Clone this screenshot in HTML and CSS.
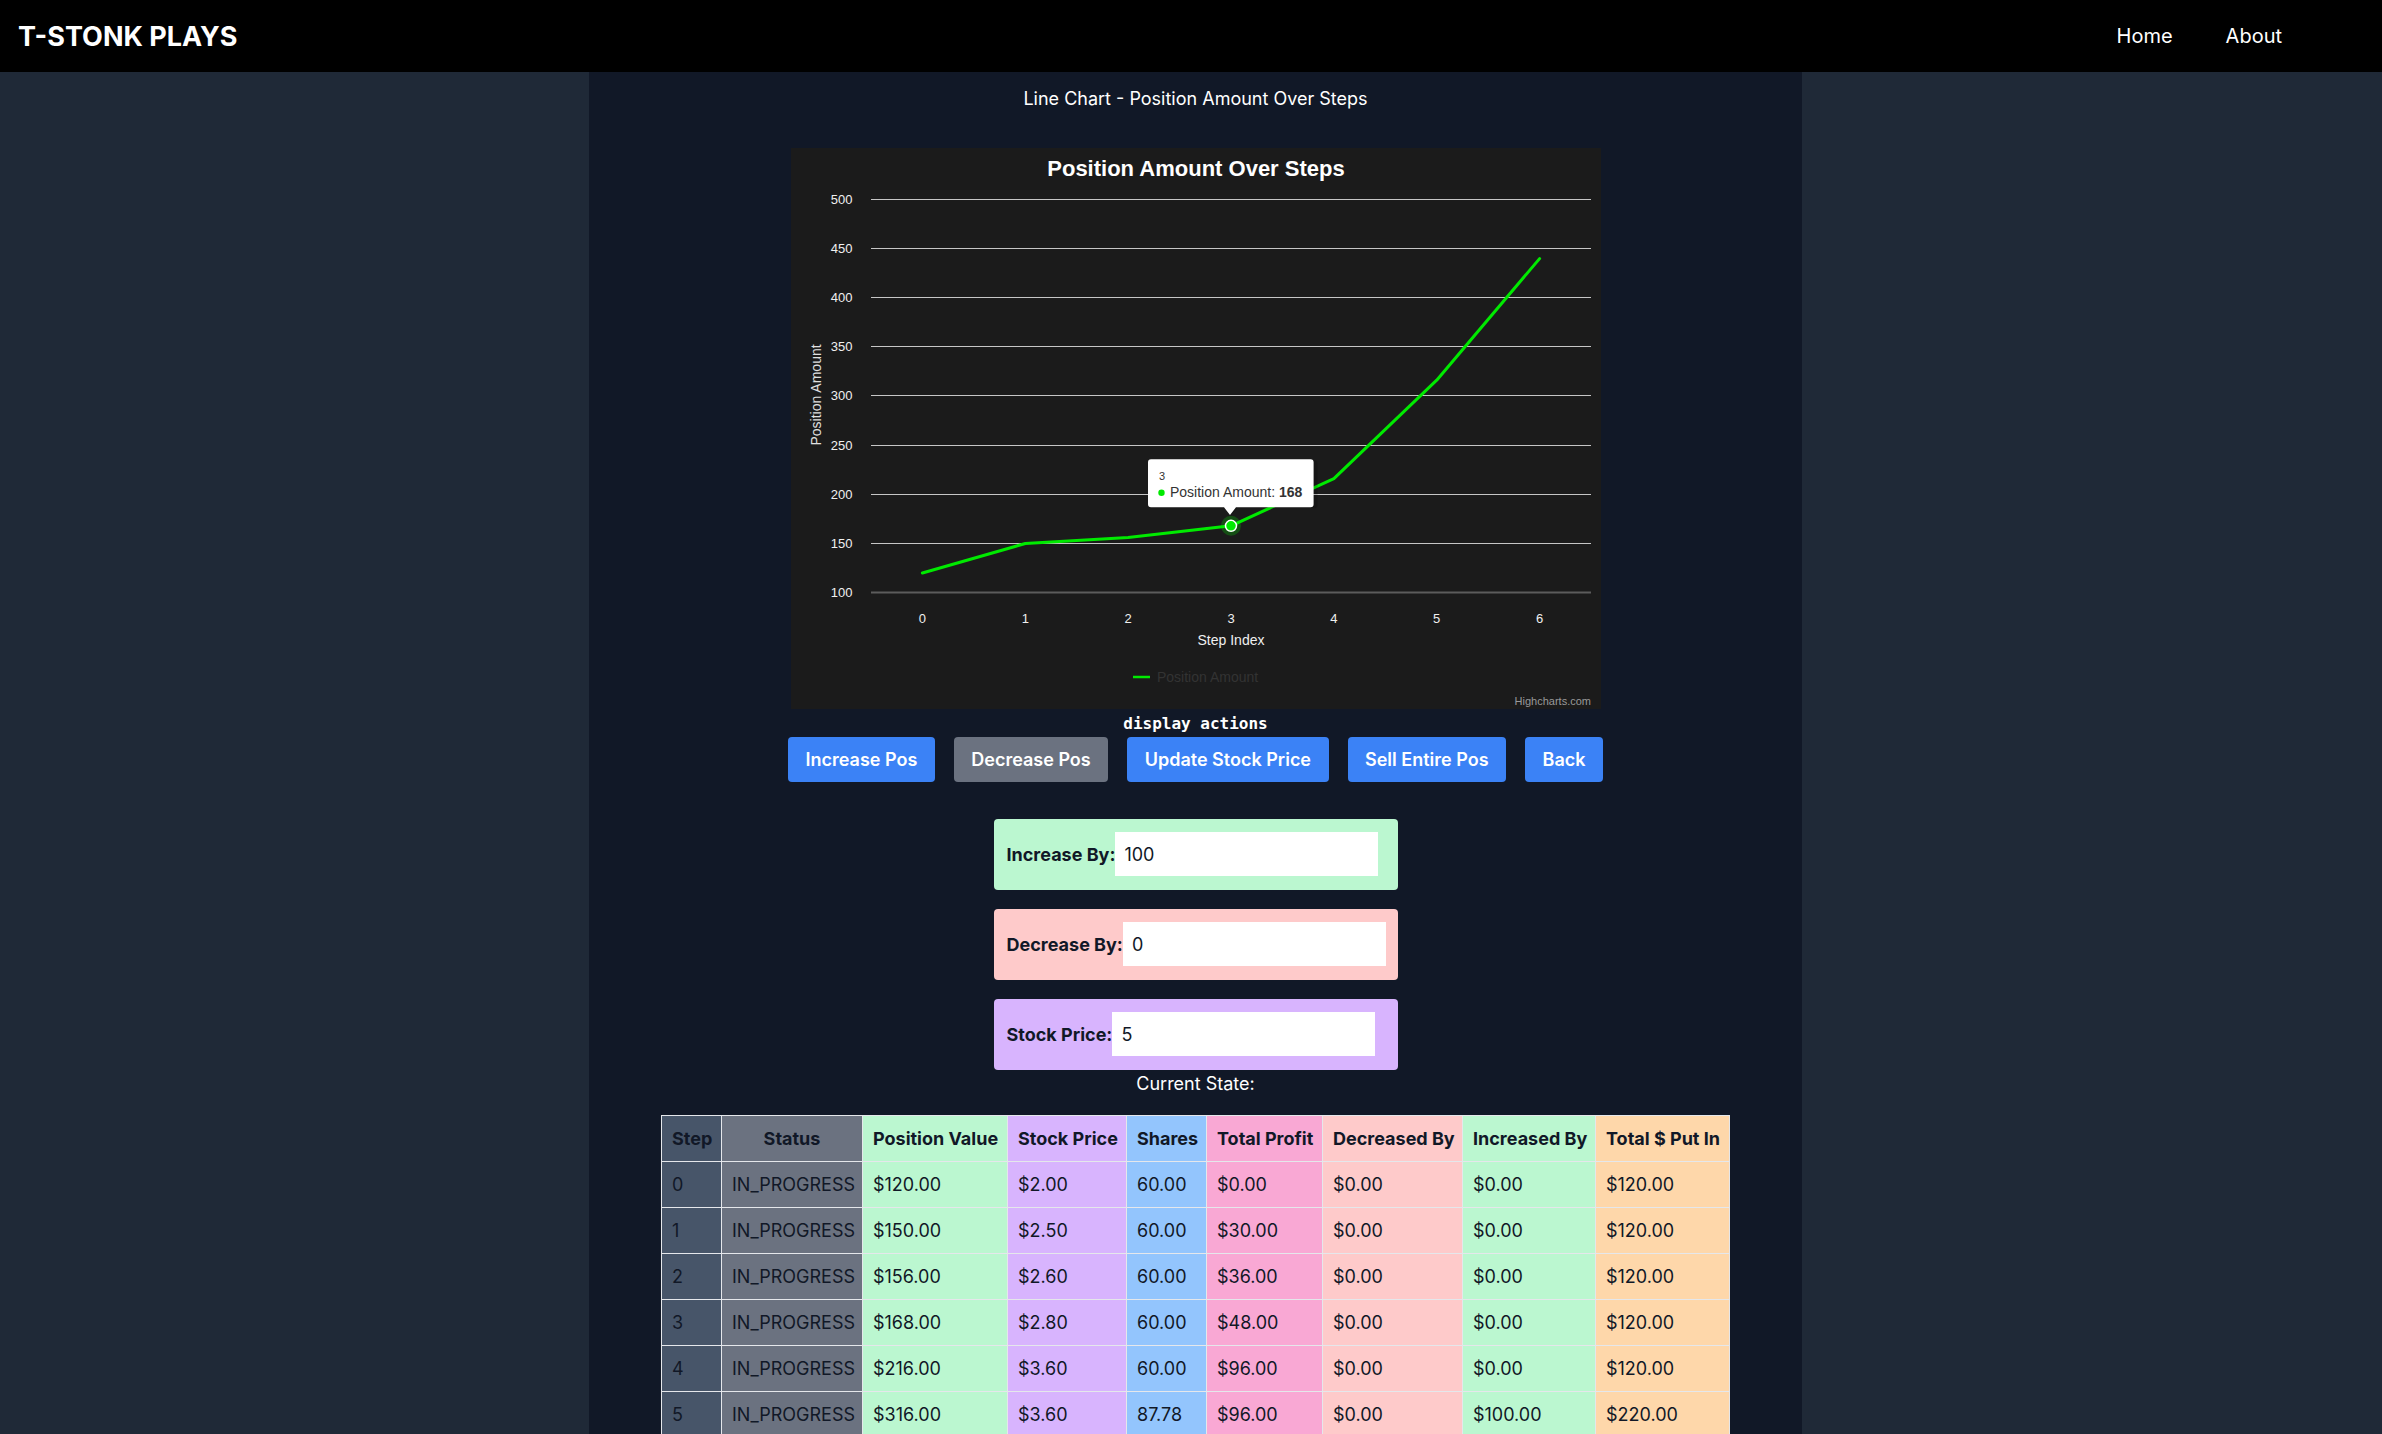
FILE: index.html
```html
<!DOCTYPE html>
<html lang="en">
<head>
<meta charset="utf-8">
<title>T-STONK PLAYS</title>
<link rel="stylesheet" href="styles.css">
</head>
<body>
<header class="topbar">
  <div class="logo">T-STONK PLAYS</div>
  <nav class="nav">
    <a href="#">Home</a>
    <a href="#">About</a>
  </nav>
</header>
<div class="layout">
  <main class="main">
    <div class="page-title">Line Chart - Position Amount Over Steps</div>
    <svg class="chart" width="810" height="561" viewBox="0 0 810 561" xmlns="http://www.w3.org/2000/svg">
      <rect class="ch-bg" x="0" y="0" width="810" height="561"/>
      <text class="ch-title" x="405" y="28" text-anchor="middle">Position Amount Over Steps</text>
      <g class="ch-grid">
        <line x1="80" x2="800" y1="51.5" y2="51.5"/>
        <line x1="80" x2="800" y1="100.5" y2="100.5"/>
        <line x1="80" x2="800" y1="149.5" y2="149.5"/>
        <line x1="80" x2="800" y1="198.5" y2="198.5"/>
        <line x1="80" x2="800" y1="247.5" y2="247.5"/>
        <line x1="80" x2="800" y1="297.5" y2="297.5"/>
        <line x1="80" x2="800" y1="346.5" y2="346.5"/>
        <line x1="80" x2="800" y1="395.5" y2="395.5"/>
      </g>
      <line class="ch-axis" x1="80" x2="800" y1="444.6" y2="444.6"/>
      <g class="ch-ylabels" text-anchor="end">
        <text x="61.5" y="55.5">500</text>
        <text x="61.5" y="104.7">450</text>
        <text x="61.5" y="153.9">400</text>
        <text x="61.5" y="203.1">350</text>
        <text x="61.5" y="252.3">300</text>
        <text x="61.5" y="301.5">250</text>
        <text x="61.5" y="350.7">200</text>
        <text x="61.5" y="399.9">150</text>
        <text x="61.5" y="449.1">100</text>
      </g>
      <text class="ch-ytitle" transform="translate(29.5 247) rotate(-90)" text-anchor="middle">Position Amount</text>
      <g class="ch-xlabels" text-anchor="middle">
        <text x="131.4" y="475">0</text>
        <text x="234.3" y="475">1</text>
        <text x="337.1" y="475">2</text>
        <text x="440" y="475">3</text>
        <text x="542.9" y="475">4</text>
        <text x="645.7" y="475">5</text>
        <text x="748.6" y="475">6</text>
      </g>
      <text class="ch-xtitle" x="440" y="497" text-anchor="middle">Step Index</text>
      <polyline class="ch-series" points="131.4,425 234.3,395.5 337.1,389.6 440,377.8 542.9,330.6 645.7,232.2 748.6,110.6"/>
      <circle class="ch-halo" cx="440" cy="377.8" r="10"/>
      <circle class="ch-point" cx="440" cy="377.8" r="5.5"/>
      <line class="ch-legend-line" x1="342" x2="359" y1="529" y2="529"/>
      <text class="ch-legend" x="366" y="534">Position Amount</text>
      <text class="ch-credits" x="800" y="557" text-anchor="end">Highcharts.com</text>
      <path class="ch-tip-shadow" d="M360.5 312.3 H523.6 Q526.6 312.3 526.6 315.3 V357.3 Q526.6 360.3 523.6 360.3 H446 L440 368 L434 360.3 H360.5 Q357.5 360.3 357.5 357.3 V315.3 Q357.5 312.3 360.5 312.3 Z"/>
      <path class="ch-tip" d="M360 311.3 H519.6 Q522.6 311.3 522.6 314.3 V356.3 Q522.6 359.3 519.6 359.3 H445 L439 367 L433 359.3 H360 Q357 359.3 357 356.3 V314.3 Q357 311.3 360 311.3 Z"/>
      <text class="ch-tip-head" x="368" y="332">3</text>
      <circle class="ch-tip-dot" cx="370.5" cy="344.7" r="3.2"/>
      <text class="ch-tip-text" x="379" y="349">Position Amount: <tspan class="ch-tip-val">168</tspan></text>
    </svg>
    <div class="actions-label">display actions</div>
    <div class="actions">
      <button class="btn">Increase Pos</button>
      <button class="btn btn-gray">Decrease Pos</button>
      <button class="btn">Update Stock Price</button>
      <button class="btn">Sell Entire Pos</button>
      <button class="btn">Back</button>
    </div>
    <div class="panels">
      <div class="panel panel-green">
        <label class="panel-label" for="inc">Increase By:</label>
        <input class="panel-input" id="inc" type="text" value="100">
      </div>
      <div class="panel panel-red">
        <label class="panel-label" for="dec">Decrease By:</label>
        <input class="panel-input" id="dec" type="text" value="0">
      </div>
      <div class="panel panel-purple">
        <label class="panel-label" for="price">Stock Price:</label>
        <input class="panel-input" id="price" type="text" value="5">
      </div>
    </div>
    <div class="state-label">Current State:</div>
    <table class="state-table">
      <thead>
        <tr>
          <th class="c-step">Step</th>
          <th class="c-status">Status</th>
          <th class="c-pv">Position Value</th>
          <th class="c-sp">Stock Price</th>
          <th class="c-sh">Shares</th>
          <th class="c-tp">Total Profit</th>
          <th class="c-db">Decreased By</th>
          <th class="c-ib">Increased By</th>
          <th class="c-pi">Total $ Put In</th>
        </tr>
      </thead>
      <tbody>
        <tr><td class="c-step">0</td><td class="c-status">IN_PROGRESS</td><td class="c-pv">$120.00</td><td class="c-sp">$2.00</td><td class="c-sh">60.00</td><td class="c-tp">$0.00</td><td class="c-db">$0.00</td><td class="c-ib">$0.00</td><td class="c-pi">$120.00</td></tr>
        <tr><td class="c-step">1</td><td class="c-status">IN_PROGRESS</td><td class="c-pv">$150.00</td><td class="c-sp">$2.50</td><td class="c-sh">60.00</td><td class="c-tp">$30.00</td><td class="c-db">$0.00</td><td class="c-ib">$0.00</td><td class="c-pi">$120.00</td></tr>
        <tr><td class="c-step">2</td><td class="c-status">IN_PROGRESS</td><td class="c-pv">$156.00</td><td class="c-sp">$2.60</td><td class="c-sh">60.00</td><td class="c-tp">$36.00</td><td class="c-db">$0.00</td><td class="c-ib">$0.00</td><td class="c-pi">$120.00</td></tr>
        <tr><td class="c-step">3</td><td class="c-status">IN_PROGRESS</td><td class="c-pv">$168.00</td><td class="c-sp">$2.80</td><td class="c-sh">60.00</td><td class="c-tp">$48.00</td><td class="c-db">$0.00</td><td class="c-ib">$0.00</td><td class="c-pi">$120.00</td></tr>
        <tr><td class="c-step">4</td><td class="c-status">IN_PROGRESS</td><td class="c-pv">$216.00</td><td class="c-sp">$3.60</td><td class="c-sh">60.00</td><td class="c-tp">$96.00</td><td class="c-db">$0.00</td><td class="c-ib">$0.00</td><td class="c-pi">$120.00</td></tr>
        <tr><td class="c-step">5</td><td class="c-status">IN_PROGRESS</td><td class="c-pv">$316.00</td><td class="c-sp">$3.60</td><td class="c-sh">87.78</td><td class="c-tp">$96.00</td><td class="c-db">$0.00</td><td class="c-ib">$100.00</td><td class="c-pi">$220.00</td></tr>
        <tr><td class="c-step">6</td><td class="c-status">IN_PROGRESS</td><td class="c-pv">$438.89</td><td class="c-sp">$5.00</td><td class="c-sh">87.78</td><td class="c-tp">$218.89</td><td class="c-db">$0.00</td><td class="c-ib">$0.00</td><td class="c-pi">$220.00</td></tr>
      </tbody>
    </table>
  </main>
</div>
</body>
</html>
```

FILE: styles.css
```css
* { box-sizing: border-box; }
html { scrollbar-width: none; }
html::-webkit-scrollbar { display: none; }
body {
  margin: 0;
  background: #1f2937;
  font-family: Inter, "Noto Sans", sans-serif;
  color: #ffffff;
}
.topbar {
  height: 72px;
  background: #000000;
  display: flex;
  align-items: center;
  justify-content: space-between;
  padding: 0 100px 0 18px;
}
.logo {
  font-size: 27px;
  font-weight: 700;
  line-height: 1;
}
.nav {
  display: flex;
  gap: 53px;
  font-size: 20px;
}
.nav a {
  color: #ffffff;
  text-decoration: none;
}
.layout { display: flex; }
.main {
  margin-left: 589px;
  width: 1213px;
  min-height: calc(100vh - 72px);
  background: #111827;
  display: flex;
  flex-direction: column;
  align-items: center;
  padding-bottom: 40px;
}
.page-title {
  margin-top: 14px;
  font-size: 18px;
  line-height: 26px;
}
.chart {
  display: block;
  margin-top: 36px;
  width: 810px;
  height: 561px;
}
.chart text { font-family: "Liberation Sans", Arial, sans-serif; }
.ch-bg { fill: #1b1b1b; }
.ch-title { fill: #ffffff; font-size: 22px; font-weight: 700; }
.ch-grid line { stroke: #c6c6c6; stroke-width: 1; }
.ch-axis { stroke: #5c5c5c; stroke-width: 2; }
.ch-ylabels text, .ch-xlabels text { fill: #f0f0f0; font-size: 13px; }
.ch-ytitle { fill: #e0e0e0; font-size: 14px; }
.ch-xtitle { fill: #f0f0f0; font-size: 14px; }
.ch-series { fill: none; stroke: #00ea00; stroke-width: 3; stroke-linejoin: round; stroke-linecap: round; }
.ch-halo { fill: #00ea00; opacity: 0.25; }
.ch-point { fill: #00ea00; stroke: #ffffff; stroke-width: 1.5; }
.ch-legend-line { stroke: #00ea00; stroke-width: 2.5; }
.ch-legend { fill: #333333; font-size: 14px; }
.ch-credits { fill: #999999; font-size: 11px; }
.ch-tip-shadow { fill: #000000; opacity: 0.15; }
.ch-tip { fill: #ffffff; }
.ch-tip-head { fill: #333333; font-size: 11px; }
.ch-tip-dot { fill: #00ea00; }
.ch-tip-text { fill: #333333; font-size: 14px; }
.ch-tip-val { font-weight: 700; }
.actions-label {
  margin-top: 5px;
  font-family: "DejaVu Sans Mono", monospace;
  font-weight: 700;
  font-size: 16px;
  line-height: 20px;
}
.actions {
  display: flex;
  gap: 19px;
  margin-top: 3px;
}
.btn {
  height: 45px;
  padding: 0 17.5px;
  border: 0;
  border-radius: 4px;
  background: #3b82f6;
  color: #ffffff;
  font-family: Inter, sans-serif;
  font-size: 18px;
  font-weight: 600;
}
.btn-gray { background: #6b7280; }
.panels {
  margin-top: 36.6px;
  display: flex;
  flex-direction: column;
  gap: 19px;
}
.panel {
  width: 404px;
  height: 71px;
  padding: 0 13px;
  display: flex;
  align-items: center;
  border-radius: 4px;
}
.panel-green { background: #bbf7d0; }
.panel-red { background: #fecaca; }
.panel-purple { background: #d8b4fe; }
.panel-label {
  flex-shrink: 0;
  white-space: nowrap;
  font-size: 18px;
  font-weight: 700;
  color: #111827;
}
.panel-input {
  flex-shrink: 0;
  width: 263px;
  height: 44px;
  border: 0;
  padding: 0 9px;
  background: #ffffff;
  color: #111827;
  font-family: Inter, sans-serif;
  font-size: 18px;
  outline: none;
}
.state-label {
  font-size: 18px;
  line-height: 27px;
}
.state-table {
  margin-top: 18px;
  width: 1068px;
  table-layout: fixed;
  border-collapse: collapse;
  font-size: 18px;
  color: #111827;
  border: 1px solid #e5e7eb;
}
.state-table th,
.state-table td {
  height: 46px;
  padding: 0 10px;
  border: 1px solid #e5e7eb;
  white-space: nowrap;
}
.state-table th { font-weight: 700; text-align: center; }
.state-table td { text-align: left; }
.c-step { width: 60px; background: #475569; }
.c-status { width: 141px; background: #6b7280; }
.c-pv { width: 145px; background: #bbf7d0; }
.c-sp { width: 119px; background: #d8b4fe; }
.c-sh { width: 80px; background: #93c5fd; }
.c-tp { width: 116px; background: #f9a8d4; }
.c-db { width: 140px; background: #fecaca; }
.c-ib { width: 133px; background: #bbf7d0; }
.c-pi { width: 134px; background: #fed7aa; }
```
